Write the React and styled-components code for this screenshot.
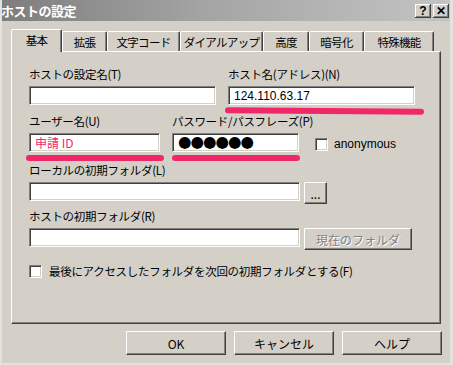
import React from "react";
import styled, { createGlobalStyle, css } from "styled-components";

const Global = createGlobalStyle`
  html, body { margin: 0; padding: 0; background: #ffffff; }
  body {
    font-family: "Noto Sans CJK JP", "Liberation Sans", sans-serif;
    font-size: 11.5px;
    color: #000;
  }
`;

const FACE = "#d4d0c8";
const PINK = "#f0286a";

const Window = styled.div`
  width: 453px;
  height: 365px;
  box-sizing: border-box;
  background: ${FACE};
  border-left: 2px solid #e4e2de;
  border-bottom: 2px solid #e4e2de;
  border-right: 3px solid #e4e2de;
  display: flex;
  flex-direction: column;
  overflow: hidden;
`;

const TitleBar = styled.div`
  height: 21px;
  flex: none;
  margin-left: -2px;
  margin-right: -3px;
  background: linear-gradient(90deg, #7d7d7d 0%, #a4a4a4 45%, #c4c4c4 100%);
  display: flex;
  align-items: center;
  padding: 0 4px 0 1px;
`;

const Title = styled.div`
  flex: 1;
  color: #ffffff;
  font-weight: bold;
  font-size: 13px;
  letter-spacing: -0.5px;
`;

const CaptionButton = styled.div`
  width: 16px;
  height: 14px;
  margin-left: 2px;
  background: ${FACE};
  box-shadow: inset -1px -1px #404040, inset 1px 1px #ffffff,
    inset -2px -2px #808080;
  display: flex;
  align-items: center;
  justify-content: center;
  font-family: "Liberation Sans", sans-serif;
  font-weight: bold;
  font-size: 12px;
  line-height: 1;
  color: #000;
`;

const Body = styled.div`
  flex: 1;
  display: flex;
  flex-direction: column;
  padding: 8px 9px 0 9px;
`;

const TabRow = styled.div`
  display: flex;
  align-items: flex-end;
  height: 22px;
  padding-left: 1px;
  position: relative;
  z-index: 1;
`;

const Tab = styled.div`
  box-sizing: border-box;
  height: 20px;
  width: ${(p) => p.$w}px;
  background: ${FACE};
  display: flex;
  align-items: center;
  justify-content: center;
  font-size: 11.5px;
  white-space: nowrap;
  letter-spacing: -0.7px;
  border-top: 1px solid #ffffff;
  border-left: 1px solid #ffffff;
  border-right: 1px solid #404040;
  box-shadow: inset -1px 0 #808080;
  border-radius: 2px 2px 0 0;
  ${(p) =>
    p.$active &&
    css`
      height: 23px;
      margin-bottom: -1px;
      margin-left: -1px;
      padding-bottom: 2px;
    `}
`;

const Panel = styled.div`
  box-sizing: border-box;
  width: 430px;
  height: 273px;
  border-top: 1px solid #ffffff;
  border-left: 1px solid #ffffff;
  border-right: 1px solid #404040;
  border-bottom: 1px solid #404040;
  box-shadow: inset -1px -1px #808080;
  padding: 14px 0 0 17px;
  display: flex;
  flex-direction: column;
`;

const Row = styled.div`
  display: flex;
  align-items: flex-end;
  gap: ${(p) => p.$gap || 12}px;
  margin-top: ${(p) => p.$top || 0}px;
`;

const Field = styled.div`
  display: flex;
  flex-direction: column;
  position: relative;
`;

const Label = styled.div`
  width: 0;
  height: 17px;
  line-height: 17px;
  margin-bottom: 3px;
  white-space: nowrap;
  letter-spacing: -0.3px;
`;

const Input = styled.div`
  box-sizing: border-box;
  width: ${(p) => p.$w}px;
  height: 19px;
  background: #ffffff;
  border-top: 1px solid #808080;
  border-left: 1px solid #808080;
  border-right: 1px solid #ffffff;
  border-bottom: 1px solid #ffffff;
  box-shadow: inset 1px 1px #404040, inset -1px -1px ${FACE};
  display: flex;
  align-items: center;
  padding-left: 5px;
  font-size: 12px;
  font-family: ${(p) =>
    p.$latin ? `"Liberation Sans", sans-serif` : "inherit"};
  color: ${(p) => p.$color || "#000"};
  white-space: nowrap;
  overflow: hidden;
`;

const Dots = styled.span`
  font-family: "DejaVu Sans", sans-serif;
  font-size: 15.5px;
  letter-spacing: -1px;
  line-height: 1;
`;

const Underline = styled.div`
  position: absolute;
  left: ${(p) => p.$l}px;
  width: ${(p) => p.$w}px;
  bottom: -9px;
  height: 6px;
  border-radius: 3px;
  background: ${PINK};
  transform: rotate(${(p) => p.$rot || 0}deg);
`;

const Check = styled.div`
  box-sizing: border-box;
  width: 13px;
  height: 13px;
  background: #ffffff;
  border-top: 1px solid #808080;
  border-left: 1px solid #808080;
  border-right: 1px solid #ffffff;
  border-bottom: 1px solid #ffffff;
  box-shadow: inset 1px 1px #404040, inset -1px -1px ${FACE};
  flex: none;
`;

const CheckLine = styled.label`
  display: flex;
  align-items: center;
  gap: ${(p) => p.$gap || 7}px;
  font-family: ${(p) =>
    p.$latin ? `"Liberation Sans", sans-serif` : "inherit"};
  font-size: ${(p) => (p.$latin ? 12 : 11.5)}px;
  letter-spacing: ${(p) => (p.$latin ? 0 : -0.3)}px;
  white-space: nowrap;
`;

const Button = styled.div`
  box-sizing: border-box;
  width: ${(p) => p.$w}px;
  height: ${(p) => p.$h || 23}px;
  background: ${FACE};
  border-top: 1px solid #ffffff;
  border-left: 1px solid #ffffff;
  border-right: 1px solid #404040;
  border-bottom: 1px solid #404040;
  box-shadow: inset -1px -1px #808080;
  display: flex;
  align-items: center;
  justify-content: center;
  font-size: 12px;
  color: ${(p) => (p.$disabled ? "#808080" : "#000")};
  text-shadow: ${(p) => (p.$disabled ? "1px 1px #ffffff" : "none")};
  flex: none;
`;

const Footer = styled.div`
  display: flex;
  justify-content: flex-end;
  gap: 8px;
  padding: 7px 0 0 0;
  margin-right: -1px;
`;

const tabs = [
  ["基本", 51],
  ["拡張", 45],
  ["文字コード", 73],
  ["ダイアルアップ", 83],
  ["高度", 46],
  ["暗号化", 55],
  ["特殊機能", 70],
];

export default function App() {
  return (
    <>
      <Global />
      <Window>
        <TitleBar>
          <Title>ホストの設定</Title>
          <CaptionButton>?</CaptionButton>
          <CaptionButton>✕</CaptionButton>
        </TitleBar>
        <Body>
          <TabRow>
            {tabs.map(([t, w], i) => (
              <Tab key={t} $w={w} $active={i === 0}>
                {t}
              </Tab>
            ))}
          </TabRow>
          <Panel>
            <Row>
              <Field>
                <Label>ホストの設定名(T)</Label>
                <Input $w={187} />
              </Field>
              <Field>
                <Label>ホスト名(アドレス)(N)</Label>
                <Input $w={187} $latin>
                  124.110.63.17
                </Input>
                <Underline $l={-3} $w={199} $rot={0.4} />
              </Field>
            </Row>
            <Row $top={8} $gap={12}>
              <Field>
                <Label>ユーザー名(U)</Label>
                <Input $w={131} $color={PINK}>
                  申請 ID
                </Input>
                <Underline $l={-3} $w={138} />
              </Field>
              <Field>
                <Label>パスワード/パスフレーズ(P)</Label>
                <Input $w={127}>
                  <Dots>●●●●●●</Dots>
                </Input>
                <Underline $l={0} $w={128} />
              </Field>
              <CheckLine $latin $gap={6} style={{ marginLeft: 4, marginBottom: 1 }}>
                <Check />
                anonymous
              </CheckLine>
            </Row>
            <Row $top={10} $gap={4}>
              <Field>
                <Label>ローカルの初期フォルダ(L)</Label>
                <Input $w={271} />
              </Field>
              <Button $w={23} $h={22} style={{ marginBottom: -3 }}>
                ...
              </Button>
            </Row>
            <Row $top={7} $gap={4}>
              <Field>
                <Label>ホストの初期フォルダ(R)</Label>
                <Input $w={271} />
              </Field>
              <Button $w={108} $h={22} $disabled style={{ marginBottom: -3 }}>
                現在のフォルダ
              </Button>
            </Row>
            <Row $top={16}>
              <CheckLine>
                <Check />
                最後にアクセスしたフォルダを次回の初期フォルダとする(F)
              </CheckLine>
            </Row>
          </Panel>
          <Footer>
            <Button $w={100} $h={24}>OK</Button>
            <Button $w={100} $h={24}>キャンセル</Button>
            <Button $w={100} $h={24}>ヘルプ</Button>
          </Footer>
        </Body>
      </Window>
    </>
  );
}
